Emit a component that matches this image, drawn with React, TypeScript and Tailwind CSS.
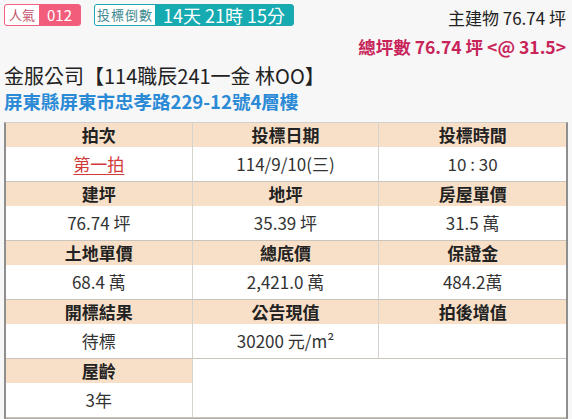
import React from "react";

const font = { fontFamily: '"Noto Sans CJK TC", "Noto Sans", sans-serif' };

type Cell = { label: string; value: React.ReactNode };

const rows: Cell[][] = [
    [
        { label: "拍次", value: <span className="text-[#d23a3a] underline underline-offset-[3px]">第一拍</span> },
        { label: "投標日期", value: "114/9/10(三)" },
        { label: "投標時間", value: "10 : 30" },
    ],
    [
        { label: "建坪", value: "76.74 坪" },
        { label: "地坪", value: "35.39 坪" },
        { label: "房屋單價", value: "31.5 萬" },
    ],
    [
        { label: "土地單價", value: "68.4 萬" },
        { label: "總底價", value: "2,421.0 萬" },
        { label: "保證金", value: "484.2萬" },
    ],
    [
        { label: "開標結果", value: "待標" },
        { label: "公告現值", value: <>30200 元/m²</> },
        { label: "拍後增值", value: "" },
    ],
];

function InfoCell({ cell, last }: { cell: Cell; last: boolean }) {
    return (
        <div className={`flex flex-col border-b border-[#c9c4bc] ${last ? "" : "border-r border-r-[#d6d2cc]"}`}>
            <div className="flex h-[24px] items-center justify-center bg-[#f8e0c8] text-[17px] font-bold text-[#222]">
                {cell.label}
            </div>
            <div className="flex h-[34px] items-center justify-center bg-white text-[17px] text-[#333]">
                {cell.value}
            </div>
        </div>
    );
}

export default function App() {
    return (
        <div className="h-[419px] w-[572px] overflow-hidden bg-[#f7f7f7]" style={font}>
            <div className="flex items-start justify-between pl-[4px] pr-[6px] pt-[4px]">
                <div className="flex items-start gap-[13px]">
                    <div className="flex h-[22px] rounded-[3px] border border-[#f0607f] bg-[#f35d7c]">
                        <span className="flex items-center rounded-l-[2px] bg-white px-[4px] text-[13px] leading-[20px] text-[#c2506a]">人氣</span>
                        <span className="flex items-center px-[8px] text-[15px] leading-[20px] text-white">012</span>
                    </div>
                    <div className="flex h-[22px] rounded-[3px] border border-[#1fa8b0] bg-[#16aab1]">
                        <span className="flex items-center rounded-l-[2px] bg-white px-[2px] text-[13px] leading-[20px] tracking-[1px] text-[#3d8a90]">投標倒數</span>
                        <span className="flex items-center whitespace-nowrap px-[8px] text-[18px] leading-[20px] text-white">14天 21時 15分</span>
                    </div>
                </div>
                <div className="text-right">
                    <div className="mt-[2px] text-[17px] leading-[24px] text-[#222]">主建物 76.74 坪</div>
                    <div className="mt-[5px] text-[17.5px] font-bold leading-[24px] text-[#c8245a]">總坪數 76.74 坪 &lt;@ 31.5&gt;</div>
                </div>
            </div>

            <div className="mt-[4px] px-[4px] text-[20px] leading-[26px] text-[#222]">金服公司【114職辰241一金 林OO】</div>
            <div className="px-[4px] text-[18.5px] font-bold leading-[24px] text-[#2b8ad6]">屏東縣屏東市忠孝路229-12號4層樓</div>

            <div className="mx-[4px] mt-[9px] border-x-2 border-t border-b-2 border-x-[#8f8f8f] border-t-[#d0d0d0] border-b-[#b0aca6] bg-white">
                <div className="grid grid-cols-3">
                    {rows.map((row, i) =>
                        row.map((cell, j) => <InfoCell key={`${i}-${j}`} cell={cell} last={j === 2} />)
                    )}
                    <InfoCell cell={{ label: "屋齡", value: "3年" }} last={false} />
                    <div className="col-span-2 border-b border-[#c9c4bc] bg-white" />
                </div>
            </div>
        </div>
    );
}
